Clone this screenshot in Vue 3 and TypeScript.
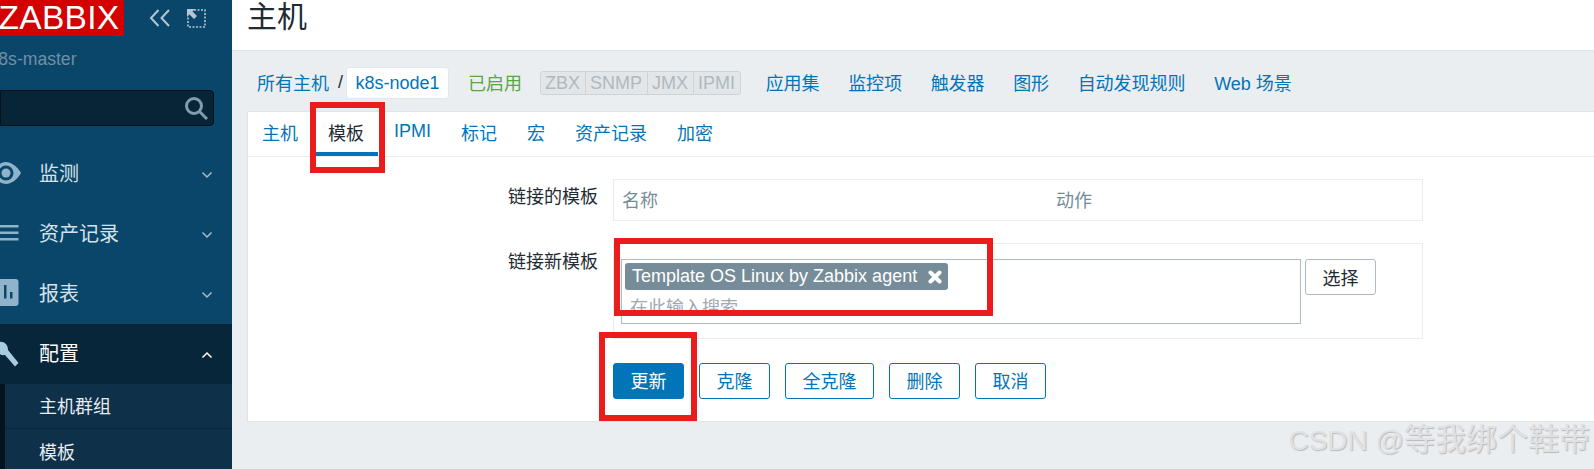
<script setup lang="ts">
interface MenuItem { label: string; icon: string; open?: boolean }
const menu: MenuItem[] = [
  { label: '监测', icon: 'eye' },
  { label: '资产记录', icon: 'list' },
  { label: '报表', icon: 'chart' },
  { label: '配置', icon: 'wrench', open: true },
]
const navLinks = ['应用集', '监控项', '触发器', '图形', '自动发现规则', 'Web 场景']
const tabs = ['主机', '模板', 'IPMI', '标记', '宏', '资产记录', '加密']
const statuses = ['ZBX', 'SNMP', 'JMX', 'IPMI']
const buttons = ['克隆', '全克隆', '删除', '取消']
</script>

<template>
  <div class="page">
    <aside class="sidebar">
      <div class="brand">
        <div class="logo"><span>ZABBIX</span></div>
        <svg class="tool t1" width="22" height="18" viewBox="0 0 22 18" fill="none" stroke="#b4c6d2" stroke-width="2">
          <path d="M9.500 1 2 9l7.500 8M20 1l-7.500 8 7.500 8" />
        </svg>
        <svg class="tool t2" width="20" height="20" viewBox="0 0 20 20" fill="none">
          <path d="M8 2h11v17H2V9" stroke="#b4c6d2" stroke-width="1.600" stroke-dasharray="2 1.500" />
          <path d="M1 1h8L6.500 3.500 11 8 8 11 3.500 6.500 1 9z" fill="#b4c6d2" />
        </svg>
      </div>
      <div class="server">k8s-master</div>
      <div class="search">
        <svg width="23" height="23" viewBox="0 0 23 23" fill="none" stroke="#7e9db0" stroke-width="3">
          <circle cx="9" cy="9" r="7.500" />
          <path d="m14.500 14.500 7.500 7.500" />
        </svg>
      </div>
      <nav class="menu">
        <div v-for="m in menu" :key="m.label" class="menu-item" :class="{ open: m.open }">
          <span class="micon">
            <svg v-if="m.icon === 'eye'" width="30" height="24" viewBox="0 0 30 24">
              <path fill="#8fb3cb" d="M-9 12C-5 5 1 1 6 1s11 4 15 11c-4 7-10 11-15 11S-5 19-9 12z" />
              <circle cx="6" cy="12" r="7.500" fill="#0a466a" />
              <circle cx="6" cy="12" r="4.500" fill="#8fb3cb" />
            </svg>
            <svg v-else-if="m.icon === 'list'" width="30" height="18" viewBox="0 0 30 18" fill="#8fb3cb">
              <rect x="-8" y="1" width="26.500" height="2.500" />
              <rect x="-8" y="7.500" width="26.500" height="2.500" />
              <rect x="-8" y="14" width="26.500" height="2.500" />
            </svg>
            <svg v-else-if="m.icon === 'chart'" width="30" height="28" viewBox="0 0 30 28">
              <rect x="-10" y="0" width="28.500" height="27" rx="3" fill="#8fb3cb" />
              <rect x="4" y="6" width="2.500" height="13.500" fill="#0a466a" />
              <rect x="10" y="13" width="2.500" height="6.500" fill="#0a466a" />
            </svg>
            <svg v-else width="30" height="34" viewBox="0 0 30 34">
              <path fill="#a9cbe0" d="M-4 7C2 4 8 7 8 14l10.500 13-3.500 3.500L5 19c-5 1-10-3-9-12z" />
            </svg>
          </span>
          <span class="mlabel">{{ m.label }}</span>
          <svg class="chev" width="12" height="8" viewBox="0 0 12 8" fill="none" :stroke="m.open ? '#ffffff' : '#a5bccb'" stroke-width="1.500">
            <path :d="m.open ? 'M1.500 6.500 6 2l4.500 4.500' : 'M1.500 1.500 6 6l4.500-4.500'" />
          </svg>
        </div>
        <div class="submenu">
          <div class="sub-item first">主机群组</div>
          <div class="sub-item">模板</div>
        </div>
      </nav>
    </aside>

    <main class="main">
      <header class="head"><h1>主机</h1></header>
      <div class="crumbs">
        <a class="link up">所有主机</a>
        <span class="slash">/</span>
        <span class="host">k8s-node1</span>
        <span class="enabled">已启用</span>
        <span class="status">
          <span v-for="s in statuses" :key="s" class="st">{{ s }}</span>
        </span>
        <div class="navlinks">
          <a v-for="n in navLinks" :key="n" class="link">{{ n }}</a>
        </div>
      </div>

      <section class="card">
        <div class="tabs">
          <span v-for="t in tabs" :key="t" class="tab" :class="{ active: t === '模板' }">{{ t }}</span>
        </div>
        <div class="form">
          <div class="row r1">
            <label>链接的模板</label>
            <div class="box names">
              <span class="cname">名称</span>
              <span>动作</span>
            </div>
          </div>
          <div class="row r2">
            <label>链接新模板</label>
            <div class="box picker">
              <div class="input">
                <span class="tag">Template OS Linux by Zabbix agent
                  <svg width="14" height="14" viewBox="0 0 14 14" stroke="#fff" stroke-width="4" stroke-linecap="round">
                    <path d="M2.500 2.500l9 9M11.500 2.500l-9 9" />
                  </svg>
                </span>
                <div class="placeholder">在此输入搜索</div>
              </div>
              <button class="select">选择</button>
            </div>
          </div>
          <div class="actions">
            <button class="btn primary">更新</button>
            <button v-for="b in buttons" :key="b" class="btn">{{ b }}</button>
          </div>
        </div>
      </section>
    </main>

    <div class="mark m1"></div>
    <div class="mark m2"></div>
    <div class="mark m3"></div>
    <div class="watermark">CSDN @<span class="wm-cjk">等我绑个鞋带</span></div>
  </div>
</template>

<style>
html, body { margin: 0; height: 100%; overflow: hidden; }
</style>

<style scoped>
.page {
  position: relative;
  display: flex;
  width: 1594px;
  height: 469px;
  overflow: hidden;
  font-family: "Liberation Sans", "Noto Sans CJK SC", sans-serif;
  font-size: 18px;
  background: #ebeef0;
}
.sidebar {
  flex: none;
  width: 232px;
  background: #0a466a;
  overflow: hidden;
}
.brand { position: relative; height: 35px; }
.logo {
  width: 124px;
  height: 36px;
  background: #d40000;
  overflow: hidden;
}
.logo span {
  display: block;
  margin-left: -1.500px;
  color: #fff;
  font-size: 33.500px;
  line-height: 36px;
  letter-spacing: 0.300px;
}
.tool { position: absolute; }
.t1 { left: 149px; top: 9px; }
.t2 { left: 186px; top: 8px; }
.server {
  margin-top: 14px;
  margin-left: -10.500px;
  color: #6f8fa5;
  font-size: 17.600px;
  line-height: 20px;
}
.search {
  display: flex;
  align-items: center;
  justify-content: flex-end;
  box-sizing: border-box;
  width: 214px;
  height: 36px;
  margin-top: 21px;
  padding-right: 5px;
  background: #082437;
  border: 1px solid #03111b;
  border-radius: 0 4px 4px 0;
}
.menu { margin-top: 18px; }
.menu-item {
  display: flex;
  align-items: center;
  box-sizing: border-box;
  height: 60px;
  padding-bottom: 3px;
  color: #d6e2ea;
  font-size: 20px;
}
.menu-item.open {
  background: #07263a;
  color: #fff;
}
.micon {
  display: flex;
  align-items: center;
  width: 39px;
  flex: none;
}
.mlabel { flex: 1; }
.chev { margin: 5px 19px 0 0; }
.submenu {
  box-sizing: border-box;
  height: 90px;
  background: #0f3049;
  border-left: 5px solid #03141f;
  color: #e6edf2;
}
.sub-item {
  display: flex;
  align-items: center;
  box-sizing: border-box;
  height: 45px;
  padding: 0 0 2px 34px;
}
.sub-item.first { border-bottom: 1px solid #07263a; }
.main { flex: 1; min-width: 0; }
.head {
  box-sizing: border-box;
  height: 51px;
  padding-left: 15px;
  background: #fff;
  border-bottom: 1px solid #dfe4e7;
}
.head h1 {
  margin: 0;
  color: #1f2c33;
  font-size: 30px;
  font-weight: 400;
  line-height: 33px;
}
.crumbs {
  display: flex;
  align-items: center;
  box-sizing: border-box;
  height: 60px;
  padding: 4px 0 0 25px;
}
.link { color: #0275b8; }
.up { margin-bottom: 2px; }
.slash { margin: 0 3px 2px 9px; color: #1f2c33; }
.host {
  box-sizing: border-box;
  display: flex;
  align-items: center;
  height: 32px;
  padding: 0 8.500px;
  background: #fff;
  border: 1px solid #e4e8eb;
  border-radius: 3px;
  color: #0275b8;
}
.enabled { margin: 0 0 3px 19px; color: #59a642; }
.status {
  display: flex;
  box-sizing: border-box;
  height: 24px;
  margin-left: 17.500px;
  background: #e3e6e8;
  border: 1px solid #cdd3d6;
  border-radius: 3px;
  color: #b0b9bf;
  line-height: 22px;
}
.st { padding: 0 4.500px; border-left: 1px solid #cdd3d6; }
.st:first-child { border-left: 0; }
.navlinks { display: flex; gap: 28.500px; margin: 0 0 3px 25px; }
.card {
  box-sizing: border-box;
  height: 311px;
  margin-left: 15px;
  background: #fff;
  border: 1px solid #dfe4e7;
  border-right: 0;
}
.tabs {
  display: flex;
  gap: 2px;
  box-sizing: border-box;
  height: 45px;
  border-bottom: 1px solid #ebeef0;
}
.tab {
  display: flex;
  align-items: center;
  box-sizing: border-box;
  height: 44px;
  padding: 0 14px 1px;
  border-bottom: 4px solid transparent;
  color: #0275b8;
}
.tab.active {
  color: #1f2c33;
  border-bottom-color: #0275b8;
}
.form { padding-top: 22px; color: #1f2c33; }
.row { display: flex; align-items: flex-start; }
.row label {
  box-sizing: border-box;
  width: 350px;
  padding-top: 8px;
  text-align: right;
  margin-right: 15px;
  line-height: 20px;
}
.box {
  box-sizing: border-box;
  width: 810px;
  border: 1px solid #ebeef0;
}
.names {
  display: flex;
  align-items: center;
  height: 42px;
  padding: 0 0 3px 8px;
  color: #768d99;
}
.cname { width: 434px; }
.r2 { margin-top: 22px; }
.r2 label { padding-top: 9px; }
.picker {
  display: flex;
  align-items: flex-start;
  height: 96px;
  padding: 15px 0 0 7px;
}
.input {
  box-sizing: border-box;
  width: 680px;
  height: 65px;
  padding: 3px;
  border: 1px solid #acbbc6;
  overflow: hidden;
}
.tag {
  display: inline-flex;
  align-items: center;
  gap: 11px;
  box-sizing: border-box;
  height: 27px;
  padding: 0 6px 0 7px;
  background: #768d99;
  border-radius: 3px;
  color: #fff;
}
.placeholder {
  margin: 8px 0 0 5px;
  color: #a2a8ab;
  line-height: 20px;
}
.select {
  box-sizing: border-box;
  width: 71px;
  height: 36px;
  margin-left: 4px;
  padding: 0;
  background: #fff;
  border: 1px solid #acbbc6;
  border-radius: 3px;
  color: #1f2c33;
  font: inherit;
}
.actions { display: flex; gap: 15px; margin: 24px 0 0 365px; }
.btn {
  box-sizing: border-box;
  height: 36px;
  padding: 0 16.500px 2px;
  background: #fff;
  border: 1px solid #0275b8;
  border-radius: 3px;
  color: #0275b8;
  font: inherit;
}
.btn.primary { background: #0275b8; color: #fff; }
.mark {
  position: absolute;
  box-sizing: border-box;
  border: 6px solid #ea1c1c;
  pointer-events: none;
}
.m1 { left: 310px; top: 102px; width: 75px; height: 71px; }
.m2 { left: 614px; top: 238px; width: 379px; height: 78px; }
.m3 { left: 599px; top: 332px; width: 98px; height: 89px; }
.watermark {
  position: absolute;
  right: 4px;
  top: 423px;
  color: #dfe1e3;
  font-size: 28px;
  line-height: 34px;
  text-shadow: 1px 1px 1px #b9bbbd;
  white-space: nowrap;
}
.wm-cjk { font-size: 31px; }
</style>
